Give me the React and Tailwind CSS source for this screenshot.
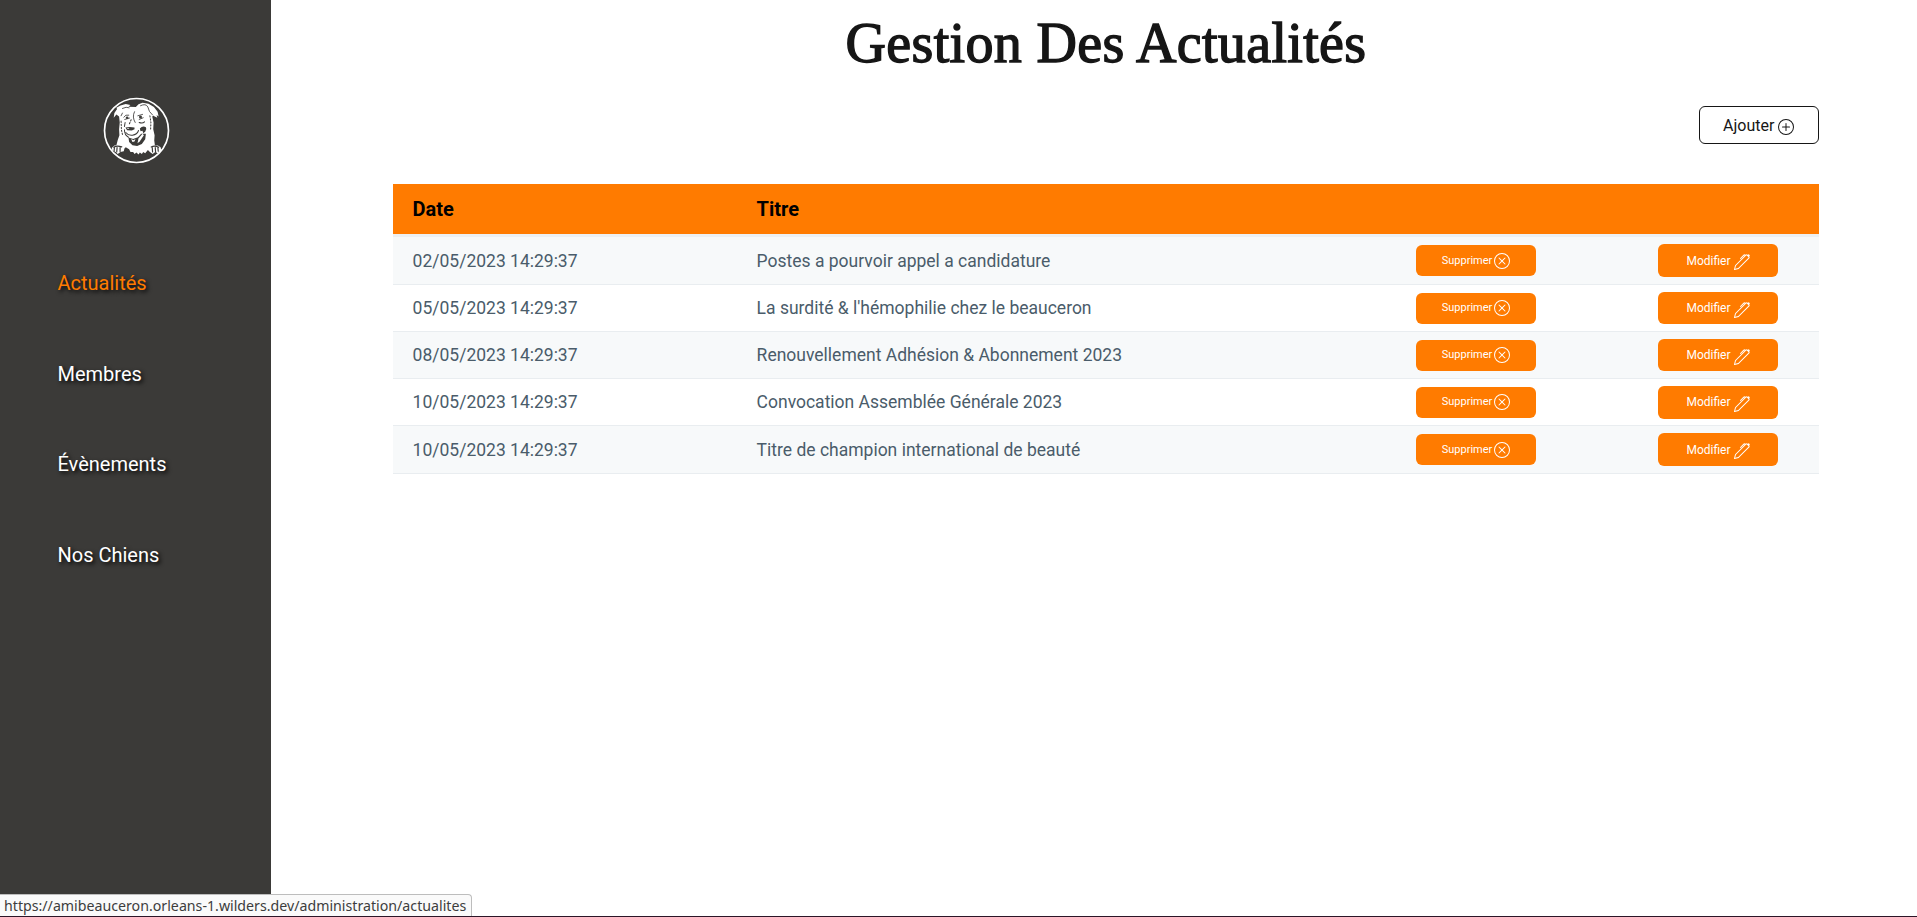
import { BsPlusCircle, BsXCircle, BsPen } from "react-icons/bs";

const NAV = [
  { label: "Actualités", active: true },
  { label: "Membres" },
  { label: "Évènements" },
  { label: "Nos Chiens" },
];

const ROWS = [
  { date: "02/05/2023 14:29:37", title: "Postes a pourvoir appel a candidature", cls: "h-12 bg-[#f7f9fa]", text: "pt-px", btn: "h-[33px]" },
  { date: "05/05/2023 14:29:37", title: "La surdité & l'hémophilie chez le beauceron", cls: "h-[47px] bg-white", text: "", btn: "h-8" },
  { date: "08/05/2023 14:29:37", title: "Renouvellement Adhésion & Abonnement 2023", cls: "h-[47px] bg-[#f7f9fa]", text: "", btn: "h-8" },
  { date: "10/05/2023 14:29:37", title: "Convocation Assemblée Générale 2023", cls: "h-[47px] bg-white", text: "", btn: "h-[33px]" },
  { date: "10/05/2023 14:29:37", title: "Titre de champion international de beauté", cls: "h-12 bg-[#f7f9fa]", text: "pt-px", btn: "h-[33px]" },
];

const GRID = "grid grid-cols-[344px_659px_242px_1fr] items-center";

function Logo() {
  return (
    <svg viewBox="40 36 200 200" className="size-[67px]" aria-hidden="true">
      <circle cx="140" cy="136" r="95.5" fill="none" stroke="#fff" strokeWidth="5" />
      {/* head, neck and paws */}
      <path
        fill="#fff"
        d="M72 98 L74 84 L82 72 L80 68 L92 61 L108 57 L122 60 L116 65 L138 66 L146 58 L158 53 L176 56 L192 66 L203 80 L206 94 L200 90 L202 98 L190 92 L187 94 L191 112 L190 132 L194 150 L193 166 L195 181 L204 181 L212 186 L214 195 L204 204 L196 200 L188 206 L180 200 L174 194 L166 204 L160 200 L156 206 L150 202 L146 208 L140 202 L134 206 L130 200 L122 200 L118 192 L108 186 L104 190 L102 198 L92 200 L84 206 L78 200 L68 196 L66 188 L74 181 L80 180 L84 164 L89 150 L88 132 L90 112 L88 94 L80 88 Z"
      />
      <g fill="none" stroke="#3b3a38" strokeLinecap="round" strokeLinejoin="round">
        <path strokeWidth="2.5" d="M94 92 L98 84 M102 96 Q107 87 117 90 M105 103 L119 99 M134 80 Q126 96 136 112 M144 92 L158 88 M148 103 L160 98 M152 62 Q168 54 174 66 Q176 80 188 90 M98 70 Q110 64 118 68" />
        <path strokeWidth="3" strokeDasharray="4 5" d="M94 108 L95 134 L99 152 M180 92 L183 112 L182 136 M124 104 L118 118" />
        <path strokeWidth="3" d="M104 124 L106 112 M104 134 Q104 150 116 156 M148 112 Q158 116 164 110" />
        <path strokeWidth="3.5" d="M73 198 L74 188 M81 200 L82 187 M91 199 L91 187 M188 200 L187 187 M197 200 L196 187 M205 198 L204 188 M72 186 Q82 180 96 185 M184 185 Q194 180 206 186" />
        <path strokeWidth="3" d="M108 142 Q116 152 128 150 Q142 148 146 136" />
      </g>
      {/* nose and muzzle */}
      <path fill="#3b3a38" d="M107 127 Q120 124 134 127 L134 132 L126 136 L112 135 Z" />
      <path fill="#fff" d="M112 129 L118 129 L118 131 L112 131 Z" />
      {/* mouth and tongue */}
      <path fill="#3b3a38" d="M150 130 Q158 121 168 126 Q172 132 166 140 L160 144 L158 137 L152 138 Z" />
      <path fill="#3b3a38" d="M116 157 L130 161 L144 156 L154 146 L168 146 L166 162 L156 176 L142 182 L128 180 L118 170 Z" />
      <path fill="#fff" d="M146 160 L158 146 L162 150 L150 168 L143 174 Z" />
      <path fill="#fff" d="M124 161 L131 165 L137 161 L134 169 L128 170 Z" />
      <circle cx="112" cy="98" r="4" fill="#3b3a38" />
      <circle cx="152" cy="96" r="4.5" fill="#3b3a38" />
    </svg>
  );
}

export default function App() {
  return (
    <div className="relative flex h-[917px] w-full overflow-hidden bg-white font-['Roboto',sans-serif]">
      <aside className="flex w-[271px] shrink-0 flex-col bg-[#3b3a38] pt-[97px]">
        <div className="flex h-[67px] justify-center pl-0.5">
          <Logo />
        </div>
        <nav className="mt-[74px] flex flex-col pl-[57.5px]">
          {NAV.map(({ label, active }) => (
            <a
              key={label}
              className={`flex h-[90.6px] items-center text-xl [text-shadow:2px_2px_4px_#000] ${active ? "text-[#ff7b00]" : "text-white"}`}
            >
              {label}
            </a>
          ))}
        </nav>
      </aside>

      <main className="flex flex-1 flex-col pl-[122px] pr-[98px]">
        <h1 className="h-[106px] whitespace-nowrap pt-[7px] text-center font-['Liberation_Serif',serif] text-[56px] leading-[72px] tracking-[0.35px] text-[#161616] [-webkit-text-stroke:1.4px_#161616]">
          Gestion Des Actualités
        </h1>
        <button className="flex h-[38px] w-[120px] items-center justify-center gap-[3.5px] self-end rounded-md border border-[#161616] pr-px pt-px text-base text-[#161616]">
          Ajouter <BsPlusCircle className="mt-0.5 size-4" />
        </button>

        <section className="mt-10 text-[17.5px] text-[#4a5c6a]">
          <div className={`${GRID} h-[50px] bg-[#ff7b00] text-xl font-bold text-black`}>
            <span className="pl-[19.6px]">Date</span>
            <span className="pl-[19.6px]">Titre</span>
          </div>
          <div className="h-[3px] bg-[#edf0f2]" />
          {ROWS.map((row, i) => (
            <div key={i} className={`${GRID} ${row.cls} border-b border-[#e9edf0]`}>
              <span className={`pl-[19.6px] ${row.text}`}>{row.date}</span>
              <span className={`pl-[19.6px] ${row.text}`}>{row.title}</span>
              <div className="pl-5">
                <button className="flex h-[31px] w-[120px] items-center justify-center gap-[2px] rounded-md bg-[#ff7b00] text-[11px] text-white">
                  <span className={row.text}>Supprimer</span> <BsXCircle className="size-4" />
                </button>
              </div>
              <div className="pl-5">
                <button className={`flex w-[120px] items-center justify-center gap-[3px] rounded-md bg-[#ff7b00] text-xs text-white ${row.btn}`}>
                  Modifier <BsPen className="mt-[3px] size-4" />
                </button>
              </div>
            </div>
          ))}
        </section>
      </main>

      <div className="absolute bottom-px left-0 flex h-[22px] w-[472px] items-center whitespace-nowrap rounded-tr border-r border-t border-[#bdbdbd] bg-[#fafafa] pl-1 font-['Noto_Sans',sans-serif] text-[14.2px] text-[#3d3d3d]">
        https://amibeauceron.orleans-1.wilders.dev/administration/actualites
      </div>
      <div className="absolute bottom-0 left-0 h-px w-full bg-[#2c1527]" />
    </div>
  );
}
